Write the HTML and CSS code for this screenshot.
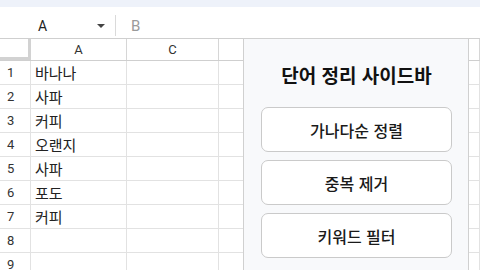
FILE: index.html
```html
<!DOCTYPE html>
<html lang="ko">
<head>
    <meta charset="UTF-8">
    <title>단어 정리 사이드바</title>
    <link rel="stylesheet" href="styles.css">
</head>
<body>
    <div class="topband"></div>
    <div class="namebar">
        <div class="namebox">
            <span>A</span>
            <span class="caret"></span>
        </div>
        <div class="fx">B</div>
    </div>

    <div class="sheet">
        <div class="row head">
            <div class="cell corner"></div>
            <div class="cell colhead">A</div>
            <div class="cell colhead">C</div>
            <div class="cell colhead"></div>
        </div>
        <div class="row"><div class="cell num">1</div><div class="cell">바나나</div><div class="cell"></div><div class="cell"></div></div>
        <div class="row"><div class="cell num">2</div><div class="cell">사파</div><div class="cell"></div><div class="cell"></div></div>
        <div class="row"><div class="cell num">3</div><div class="cell">커피</div><div class="cell"></div><div class="cell"></div></div>
        <div class="row"><div class="cell num">4</div><div class="cell">오랜지</div><div class="cell"></div><div class="cell"></div></div>
        <div class="row"><div class="cell num">5</div><div class="cell">사파</div><div class="cell"></div><div class="cell"></div></div>
        <div class="row"><div class="cell num">6</div><div class="cell">포도</div><div class="cell"></div><div class="cell"></div></div>
        <div class="row"><div class="cell num">7</div><div class="cell">커피</div><div class="cell"></div><div class="cell"></div></div>
        <div class="row"><div class="cell num">8</div><div class="cell"></div><div class="cell"></div><div class="cell"></div></div>
        <div class="row"><div class="cell num">9</div><div class="cell"></div><div class="cell"></div><div class="cell"></div></div>

        <!-- 사이드바 -->
        <div class="sidebar">
            <h2 class="title">단어 정리 사이드바</h2>
            <button class="action">가나다순 정렬</button>
            <button class="action">중복 제거</button>
            <button class="action">키워드 필터</button>
        </div>
    </div>
</body>
</html>
```

FILE: styles.css
```css
body {
    margin: 0;
    font-family: Roboto, "Noto Sans CJK KR", sans-serif;
    color: #222;
    overflow: hidden;
}
.topband {
    height: 7px;
    background-color: #eef2fa;
}
.namebar {
    height: 31px;
    display: flex;
    align-items: center;
    padding-top: 6px;
    box-sizing: border-box;
}
.namebox {
    width: 67px;
    padding-left: 38px;
    padding-right: 10px;
    box-sizing: content-box;
    display: flex;
    align-items: center;
    justify-content: space-between;
    border-right: 1px solid #dadada;
    height: 21px;
    font-size: 14px;
}
.caret {
    width: 0;
    height: 0;
    border-left: 4px solid transparent;
    border-right: 4px solid transparent;
    border-top: 4px solid #444;
}
.fx {
    margin-left: 15px;
    font-size: 15px;
    color: #9a9a9a;
}
.sheet {
    position: relative;
    font-family: "Noto Sans CJK KR", sans-serif;
}
.row {
    display: grid;
    grid-template-columns: 31px 96px 92px 1fr;
    height: 24px;
    border-bottom: 1px solid #e2e2e2;
    box-sizing: border-box;
}
.row.head {
    height: 23px;
    border-top: 1px solid #cfcfcf;
    border-bottom: 1px solid #cfcfcf;
}
.cell {
    border-right: 1px solid #e2e2e2;
    display: flex;
    align-items: center;
    padding-left: 4px;
    font-size: 15px;
    line-height: 1;
}
.head .cell {
    border-right-color: #d6d6d6;
}
.colhead {
    justify-content: center;
    padding-left: 0;
    font-family: Roboto, sans-serif;
    font-size: 13px;
    color: #333;
}
.corner {
    box-shadow: inset -3px -3px 0 #d2d2d2;
    border-right: none;
}
.num {
    padding-left: 7px;
    font-family: Roboto, sans-serif;
    font-size: 13px;
    color: #333;
}
.sidebar {
    position: absolute;
    left: 243px;
    top: 0;
    width: 226px;
    height: 250px;
    box-sizing: border-box;
    background-color: #f8f9fb;
    border: 1px solid #d0d0d0;
    border-bottom: none;
    padding: 24px 16px 0 17px;
    display: flex;
    flex-direction: column;
    gap: 8px;
}
.title {
    margin: 0 0 12px;
    text-align: center;
    font-size: 19px;
    font-weight: 700;
    line-height: 24px;
    color: #111;
}
.action {
    height: 45px;
    border: 1px solid #cacaca;
    border-radius: 7px;
    background-color: #fff;
    font-family: "Noto Sans CJK KR", sans-serif;
    font-size: 16px;
    font-weight: 500;
    color: #1a1a1a;
    cursor: pointer;
}
```
